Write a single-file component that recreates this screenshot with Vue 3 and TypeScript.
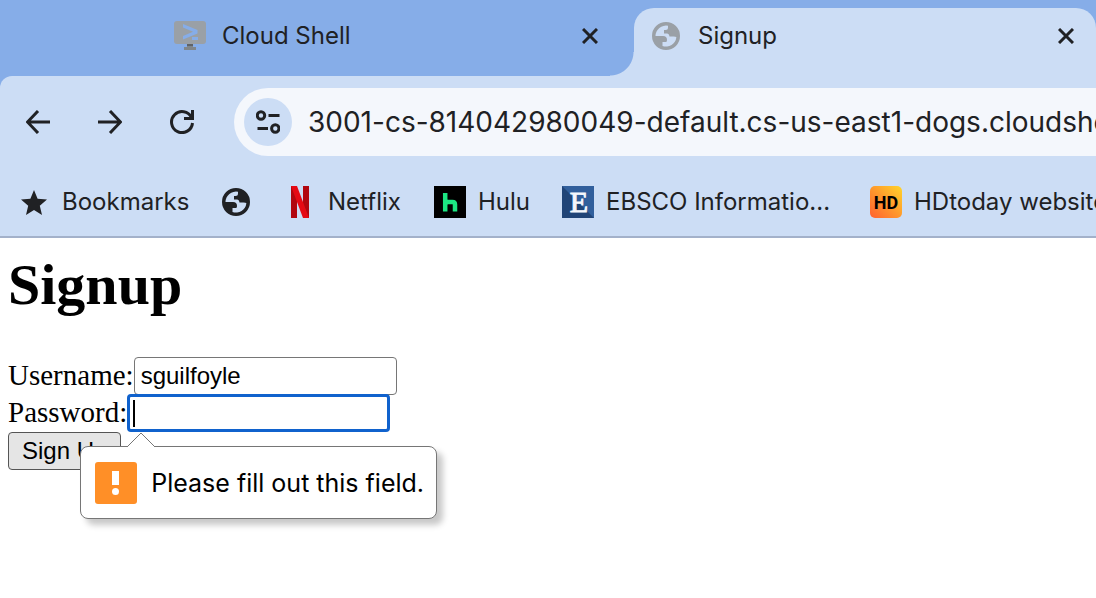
<script setup lang="ts">
import { ref } from 'vue'

const username = ref('sguilfoyle')
const password = ref('')
const address = '3001-cs-814042980049-default.cs-us-east1-dogs.cloudshell.dev'
const globe =
  'M14 0a14 14 0 1 0 0 28 14 14 0 1 0 0-28zM3.500 14A10.500 10.500 0 0 1 16 3.800V5.500q0 2.500-2.500 2.500H12v3.500h3q2 0 2.500 3h4q2.500 0 2.900.8A10.500 10.500 0 0 1 10.500 24v-4h3.500q1 0 1-2 0-4-4-4z'
</script>

<template>
  <div class="browser">
    <header>
      <nav class="tabs" aria-label="Tabs">
        <div class="tab">
          <svg class="shell-icon" viewBox="0 0 32 30" aria-hidden="true">
            <rect width="32" height="23" rx="3" fill="#9aa0a6" />
            <path d="M13 23h6v3h3v3H10v-3h3z" fill="#80868b" />
            <path d="M13 23h6v2h-6z" fill="#5f6368" />
            <path d="M9 3l14.500 6v3.500L9 18.500v-3.500l10-4.300L9 6.500zM18 16h6v3h-6z" fill="#86ade8" />
          </svg>
          <span class="title">Cloud Shell</span>
          <button class="close" type="button" aria-label="Close Cloud Shell">
            <svg viewBox="0 0 16 16"><path d="M1 1l14 14M15 1L1 15" /></svg>
          </button>
        </div>
        <div class="tab active">
          <svg class="globe" viewBox="0 0 28 28" aria-hidden="true"><path :d="globe" fill="#9aa0a6" fill-rule="evenodd" /></svg>
          <span class="title">Signup</span>
          <button class="close" type="button" aria-label="Close Signup">
            <svg viewBox="0 0 16 16"><path d="M1 1l14 14M15 1L1 15" /></svg>
          </button>
        </div>
      </nav>

      <div class="chrome">
        <div class="toolbar">
          <button type="button" aria-label="Back">
            <svg viewBox="0 0 24 24"><path d="M24 12H2M12 1L1.500 12 12 23" /></svg>
          </button>
          <button type="button" aria-label="Forward">
            <svg viewBox="0 0 24 24"><path d="M0 12h22M12 1l10.500 11L12 23" /></svg>
          </button>
          <button type="button" aria-label="Reload">
            <svg viewBox="0 0 24 24"><path d="M21.500 7.500A10.500 10.500 0 1 0 22.500 13M22.500 0v8.500H14" /></svg>
          </button>
          <div class="address">
            <button class="site" type="button" aria-label="Site information">
              <svg viewBox="0 0 24 24">
                <circle cx="5" cy="5.500" r="3.700" /><path d="M12.500 5.500H23.500M1.500 18.500H12" /><circle cx="19.300" cy="18.500" r="3.700" />
              </svg>
            </button>
            <input type="text" aria-label="Address" readonly :value="address" />
          </div>
        </div>

        <nav class="bookmarks" aria-label="Bookmarks">
          <a class="star" href="#">
            <svg viewBox="0 0 26 25"><path d="M13 0l3.600 8.700 9.400.8-7.200 6.200L21 25l-8-5-8 5 2.200-9.300L0 9.500l9.400-.8z" fill="#202124" /></svg>
            Bookmarks
          </a>
          <a class="world" href="#" aria-label="Website">
            <svg viewBox="0 0 28 28"><path :d="globe" fill="#202124" fill-rule="evenodd" /></svg>
          </a>
          <a class="netflix" href="#">
            <svg viewBox="0 0 32 32">
              <path d="M7 0h6v32H7zM19 0h6v32h-6z" fill="#b1060f" />
              <path d="M7 0h6l12 32h-6z" fill="#e50914" />
            </svg>
            Netflix
          </a>
          <a class="hulu" href="#">
            <svg viewBox="0 0 32 32">
              <path d="M0 0h32v32H0z" />
              <path d="M11.200 7v18.500M21 25.500v-7q0-2.500-2.500-2.500h-4.500q-2.800 0-2.800 3" fill="none" stroke="#1ce783" stroke-width="4.500" />
            </svg>
            Hulu
          </a>
          <a class="ebsco" href="#">
            <svg viewBox="0 0 32 32">
              <path d="M0 0h32v32H0z" fill="#315f9c" /><path d="M0 0v32h32z" fill="#204477" />
              <text x="17" y="26" text-anchor="middle" class="serif-letter">E</text>
            </svg>
            EBSCO Informatio...
          </a>
          <a class="hd" href="#">
            <svg viewBox="0 0 32 32">
              <defs>
                <linearGradient id="amber" x1="0" y1="1" x2="1" y2="0">
                  <stop offset="0" stop-color="#ff6130" /><stop offset=".5" stop-color="#ff982c" /><stop offset="1" stop-color="#ffd52b" />
                </linearGradient>
              </defs>
              <rect width="32" height="32" rx="5" fill="url(#amber)" />
              <text x="16" y="23" text-anchor="middle" class="hd-letters">HD</text>
            </svg>
            HDtoday website
          </a>
        </nav>
      </div>
    </header>

    <main>
      <h1>Signup</h1>
      <form @submit.prevent>
        <div class="field">
          <label for="username">Username:</label>
          <input id="username" v-model="username" type="text" />
        </div>
        <div class="field">
          <label for="password">Password:</label>
          <span class="focused">
            <input id="password" v-model="password" type="password" required aria-describedby="hint" />
            <span class="caret"></span>
            <span id="hint" class="hint" role="alert">
              <svg class="arrow" viewBox="0 0 28 15" aria-hidden="true">
                <path d="M0 15L14 1l14 14" fill="#fff" stroke="#767676" />
              </svg>
              <svg class="warning" viewBox="0 0 42 42" aria-hidden="true">
                <rect width="42" height="42" rx="3" fill="#ff8f27" />
                <path d="M17 9h7v14h-7z" fill="#fff" /><circle cx="20.500" cy="29.500" r="3.500" fill="#fff" />
              </svg>
              Please fill out this field.
            </span>
          </span>
        </div>
        <button class="submit" type="submit">Sign Up</button>
      </form>
    </main>
  </div>
</template>

<style>
body {
  margin: 0;
  background: #fff;
}
</style>

<style scoped>
.browser {
  min-height: 100vh;
  overflow: hidden;
  background: #fff;
}
header {
  background: #86ade8;
  color: #202124;
  font: 24px/32px Inter, sans-serif;
}
button {
  box-sizing: border-box;
  padding: 0;
  border: 0;
  background: none;
  color: inherit;
}
svg {
  display: block;
  flex: none;
}
.tabs {
  display: flex;
  padding-top: 8px;
}
.tab {
  display: flex;
  align-items: center;
  box-sizing: border-box;
  flex: 0 0 634px;
  height: 68px;
  padding: 0 32px 12px 174px;
}
.tab.active {
  position: relative;
  flex: 1;
  padding: 0 18px 12px;
  border-radius: 20px 20px 0 0;
  background: #ccddf5;
}
.tab.active::before {
  content: '';
  position: absolute;
  right: 100%;
  bottom: 0;
  width: 24px;
  height: 24px;
  background: radial-gradient(circle at 0 0, transparent 23px, #ccddf5 24px);
}
.title {
  flex: 1;
  margin-left: 16px;
}
.active .title {
  margin-left: 18px;
}
.shell-icon {
  width: 32px;
  height: 30px;
}
.globe {
  width: 28px;
  height: 28px;
}
.close {
  width: 24px;
  height: 24px;
  padding: 4px;
}
.close svg {
  width: 16px;
  height: 16px;
  fill: none;
  stroke: #202124;
  stroke-width: 3;
}
.chrome {
  border-bottom: 2px solid #a3b1ca;
  border-radius: 12px 0 0 0;
  background: #ccddf5;
}
.toolbar {
  display: flex;
  align-items: center;
  gap: 48px;
  padding: 12px 0 12px 26px;
}
.toolbar svg {
  width: 24px;
  height: 24px;
  fill: none;
  stroke: #202124;
  stroke-width: 3;
}
.address {
  display: flex;
  align-items: center;
  flex: 1;
  min-width: 0;
  height: 68px;
  margin-left: -8px;
  padding-left: 10px;
  border-radius: 34px 0 0 34px;
  background: #f4f7fc;
}
.site {
  display: grid;
  place-items: center;
  flex: none;
  width: 48px;
  height: 48px;
  border-radius: 50%;
  background: #ccddf5;
}
.address input {
  flex: 1;
  min-width: 0;
  margin-left: 16px;
  padding: 0;
  border: 0;
  outline: 0;
  background: none;
  color: #202124;
  font: 28px/36px Inter, sans-serif;
}
.bookmarks {
  display: flex;
  align-items: center;
  height: 68px;
  padding-left: 21px;
  overflow: hidden;
  white-space: nowrap;
}
.bookmarks a {
  display: flex;
  align-items: center;
  flex: none;
  gap: 12px;
  color: inherit;
  text-decoration: none;
}
.bookmarks svg {
  width: 32px;
  height: 32px;
}
.bookmarks .star {
  width: 201px;
  gap: 15px;
}
.bookmarks .star svg {
  width: 26px;
  height: 25px;
}
.bookmarks .world {
  width: 62px;
}
.bookmarks .world svg {
  width: 28px;
  height: 28px;
}
.bookmarks .netflix {
  width: 150px;
}
.bookmarks .hulu {
  width: 128px;
}
.bookmarks .ebsco {
  width: 308px;
}
.serif-letter {
  fill: #f4f7fc;
  stroke: #f4f7fc;
  font: 30px 'Liberation Serif', serif;
}
.hd-letters {
  font: bold 18px Roboto, sans-serif;
}
main {
  padding: 14px 8px;
  color: #000;
  font: 29px/36px 'Liberation Serif', serif;
}
h1 {
  margin: 0 0 39px;
  font-size: 58px;
  line-height: 66px;
}
.field {
  display: flex;
  height: 37px;
}
.field input {
  display: block;
  box-sizing: border-box;
  width: 263px;
  height: 38px;
  padding: 2px 6px;
  border: 1px solid #767676;
  border-radius: 4px;
  outline: 0;
  background: #fff;
  color: #000;
  font: 24px 'Liberation Sans', sans-serif;
}
.focused {
  position: relative;
}
.focused input {
  border: 3px solid #1062cd;
  caret-color: transparent;
}
.caret {
  position: absolute;
  top: 6px;
  left: 6px;
  width: 2px;
  height: 27px;
  background: #000;
}
.hint {
  position: absolute;
  z-index: 1;
  top: 52px;
  left: -47px;
  display: flex;
  align-items: center;
  gap: 14px;
  box-sizing: border-box;
  height: 73px;
  padding: 0 12px 0 14px;
  border: 1px solid #767676;
  border-radius: 8px;
  background: #fff;
  box-shadow: 6px 6px 6px rgb(0 0 0 / 22%);
  font: 25px/32px Inter, sans-serif;
  white-space: nowrap;
}
.arrow {
  position: absolute;
  bottom: 71px;
  left: 46px;
  width: 28px;
  height: 15px;
}
.warning {
  width: 42px;
  height: 42px;
}
.submit {
  display: block;
  height: 38px;
  margin-top: 1px;
  padding: 0 13px;
  border: 1px solid #555;
  border-radius: 4px;
  background: #e5e5e5;
  color: #000;
  font: 24px 'Liberation Sans', sans-serif;
}
</style>
